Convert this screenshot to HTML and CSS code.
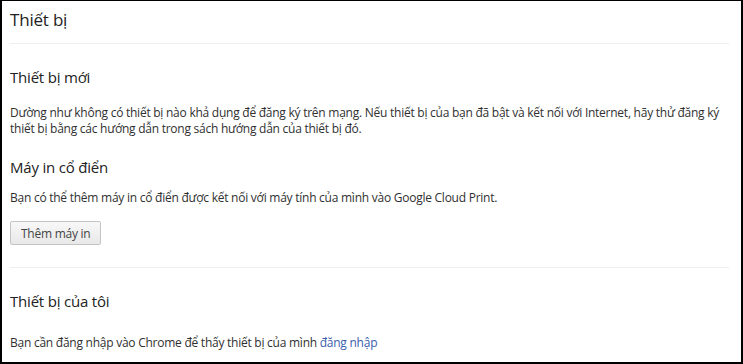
FILE: index.html
```html
<!DOCTYPE html>
<html lang="vi">
<head>
    <meta charset="UTF-8">
    <title>Thiết bị</title>
    <link rel="stylesheet" href="styles.css">
</head>
<body>
    <div class="page">
        <header class="page-header">
            <h1>Thiết bị</h1>
        </header>

        <section class="section">
            <h2>Thiết bị mới</h2>
            <p class="note">Dường như không có thiết bị nào khả dụng để đăng ký trên mạng. Nếu thiết bị của bạn đã bật và kết nối với Internet, hãy thử đăng ký thiết bị bằng các hướng dẫn trong sách hướng dẫn của thiết bị đó.</p>

            <h2 class="sub">Máy in cổ điển</h2>
            <p class="note tight">Bạn có thể thêm máy in cổ điển được kết nối với máy tính của mình vào Google Cloud Print.</p>
            <button class="btn">Thêm máy in</button>
        </section>

        <section class="section last">
            <h2>Thiết bị của tôi</h2>
            <p class="note">Bạn cần đăng nhập vào Chrome để thấy thiết bị của mình <a href="#">đăng nhập</a></p>
        </section>
    </div>
</body>
</html>
```

FILE: styles.css
```css
html, body {
    margin: 0;
    height: 100%;
}
body {
    font-family: 'Open Sans', 'Noto Sans', sans-serif;
    color: #303030;
    background: #ffffff;
}
.page {
    box-sizing: border-box;
    height: 364px;
    border-top: 1px solid #000;
    border-left: 2px solid #000;
    border-right: 2px solid #000;
    border-bottom: 2px solid #000;
    padding: 0 12px 0 8px;
}
.page-header {
    border-bottom: 1px solid #eeeeee;
    padding: 7px 0 11px;
}
h1 {
    margin: 0;
    font-size: 17px;
    font-weight: normal;
    color: #222;
    line-height: 24px;
    letter-spacing: -0.2px;
}
.section {
    border-bottom: 1px solid #eeeeee;
    padding-top: 22px;
    padding-bottom: 22px;
}
.section.last {
    border-bottom: none;
}
h2 {
    margin: 0;
    font-size: 15px;
    font-weight: normal;
    color: #222;
    line-height: 22px;
    letter-spacing: -0.2px;
}
h2.sub {
    margin-top: 19px;
}
.note {
    margin: 17px 0 0;
    font-size: 12px;
    line-height: 16px;
    letter-spacing: -0.25px;
}
.note.tight {
    margin-top: 12px;
}
.last .note {
    margin-top: 23px;
}
.note a {
    color: #3b5eac;
    text-decoration: none;
}
.btn {
    margin-top: 15px;
    font-family: inherit;
    font-size: 12px;
    letter-spacing: -0.25px;
    color: #444;
    background: linear-gradient(#f8f8f8, #e8e8e8);
    border: 1px solid #c4c4c4;
    border-radius: 2px;
    padding: 3px 10px;
    height: 24px;
}
```
